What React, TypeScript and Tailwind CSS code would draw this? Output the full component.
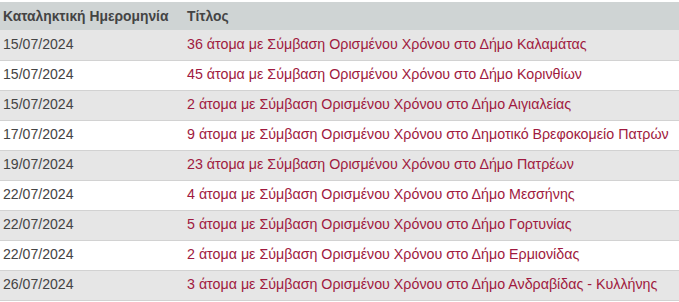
import React from 'react';

const rows = [
  { date: '15/07/2024', title: '36 άτομα με Σύμβαση Ορισμένου Χρόνου στο Δήμο Καλαμάτας' },
  { date: '15/07/2024', title: '45 άτομα με Σύμβαση Ορισμένου Χρόνου στο Δήμο Κορινθίων' },
  { date: '15/07/2024', title: '2 άτομα με Σύμβαση Ορισμένου Χρόνου στο Δήμο Αιγιαλείας' },
  { date: '17/07/2024', title: '9 άτομα με Σύμβαση Ορισμένου Χρόνου στο Δημοτικό Βρεφοκομείο Πατρών' },
  { date: '19/07/2024', title: '23 άτομα με Σύμβαση Ορισμένου Χρόνου στο Δήμο Πατρέων' },
  { date: '22/07/2024', title: '4 άτομα με Σύμβαση Ορισμένου Χρόνου στο Δήμο Μεσσήνης' },
  { date: '22/07/2024', title: '5 άτομα με Σύμβαση Ορισμένου Χρόνου στο Δήμο Γορτυνίας' },
  { date: '22/07/2024', title: '2 άτομα με Σύμβαση Ορισμένου Χρόνου στο Δήμο Ερμιονίδας' },
  { date: '26/07/2024', title: '3 άτομα με Σύμβαση Ορισμένου Χρόνου στο Δήμο Ανδραβίδας - Κυλλήνης' },
];

const App: React.FC = () => {
  return (
    <div className="w-[679px] h-[302px] bg-white pt-[2px] font-['Liberation_Sans',Arial,sans-serif] text-[14px] text-[#444] overflow-hidden">
      <table className="w-full border-collapse">
        <thead>
          <tr className="bg-[#cfd4d4] h-[28px]">
            <th className="w-[184px] pl-[3px] text-left font-bold text-[13.85px]">Καταληκτική Ημερομηνία</th>
            <th className="pl-[3px] text-left font-bold text-[13.85px]">Τίτλος</th>
          </tr>
        </thead>
        <tbody>
          {rows.map((r, i) => (
            <tr key={i} className={`h-[30px] border-b border-[#d2d2d2] ${i % 2 === 0 ? 'bg-[#e6e6e6]' : 'bg-white'}`}>
              <td className="pl-[3px] text-[14.1px]">{r.date}</td>
              <td className="pl-[3px] text-[#a01a40] text-[14.25px] whitespace-nowrap">{r.title}</td>
            </tr>
          ))}
        </tbody>
      </table>
    </div>
  );
};

export default App;
